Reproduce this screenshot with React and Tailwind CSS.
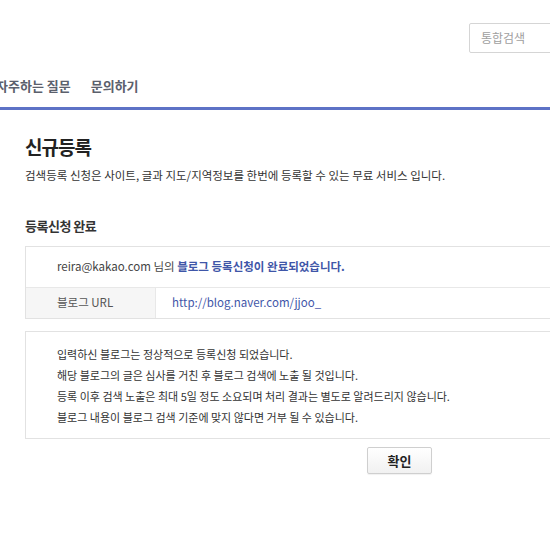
import React from "react";

const notices = [
  "입력하신 블로그는 정상적으로 등록신청 되었습니다.",
  "해당 블로그의 글은 심사를 거친 후 블로그 검색에 노출 될 것입니다.",
  "등록 이후 검색 노출은 최대 5일 정도 소요되며 처리 결과는 별도로 알려드리지 않습니다.",
  "블로그 내용이 블로그 검색 기준에 맞지 않다면 거부 될 수 있습니다.",
];

const App = () => {
  return (
    <div
      className="w-[550px] h-[549px] overflow-hidden bg-white text-[#333]"
      style={{ fontFamily: '"Noto Sans CJK KR", "Noto Sans", sans-serif' }}
    >
      <div className="w-[640px]">
        {/* 상단 헤더 */}
        <div className="h-[107px] flex flex-col">
          <div className="flex pt-[23px] pl-[469px]">
            <div className="w-[110px] h-[30px] border border-[#d5d5d5] rounded-[2px] flex items-center pl-[11px] text-[12px] text-[#a0a0a0]">
              통합검색
            </div>
          </div>
          <div className="flex gap-[20px] -ml-[4px] mt-[23px] text-[13px] font-bold text-[#5b606c]">
            <span>자주하는 질문</span>
            <span>문의하기</span>
          </div>
        </div>
        <div className="h-[3px] bg-[#5d72c6]" />

        {/* 본문 */}
        <div className="pl-[25px] pt-[23px]">
          <h1 className="text-[19px] font-bold tracking-[-1px] text-[#222] leading-[28px]">
            신규등록
          </h1>
          <p className="mt-[6px] text-[11.5px] leading-[16px] text-[#333]">
            검색등록 신청은 사이트, 글과 지도/지역정보를 한번에 등록할 수 있는 무료 서비스 입니다.
          </p>

          <h2 className="mt-[33px] text-[13px] font-bold tracking-[-0.5px] text-[#333] leading-[20px]">
            등록신청 완료
          </h2>

          <div className="mt-[10px] border border-[#e2e2e2]">
            <div className="h-[41px] flex items-center pl-[31px] text-[11.5px] text-[#444] border-b border-[#e8e8e8]">
              reira@kakao.com 님의&nbsp;
              <span className="font-semibold text-[#3f56a8]">블로그 등록신청이 완료되었습니다.</span>
            </div>
            <div className="h-[30px] flex text-[11.5px]">
              <div className="w-[130px] bg-[#f6f6f6] border-r border-[#e8e8e8] flex items-center pl-[31px] text-[#555]">
                블로그 URL
              </div>
              <div className="flex items-center pl-[16px] text-[#3f56a8]">
                http://blog.naver.com/jjoo_
              </div>
            </div>
          </div>

          <div className="mt-[12px] border border-[#e2e2e2] pl-[31px] pt-[12px] pb-[10px] text-[11px] leading-[21px] text-[#333]">
            {notices.map((line) => (
              <p key={line}>{line}</p>
            ))}
          </div>

          <div className="flex pl-[342px] mt-[8px]">
            <button className="w-[65px] h-[27px] border border-[#cfcfcf] rounded-[2px] bg-gradient-to-b from-white to-[#f1f1f1] shadow-[0_1px_1px_rgba(0,0,0,0.06)] text-[13px] font-bold text-[#222]">
              확인
            </button>
          </div>
        </div>
      </div>
    </div>
  );
};

export default App;
